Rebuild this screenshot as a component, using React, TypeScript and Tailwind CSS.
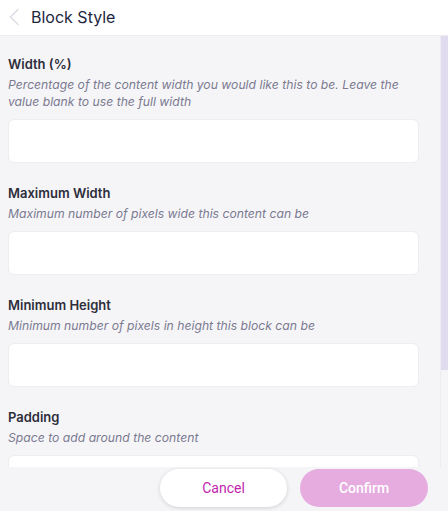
import React, { useState } from "react";

type Field = { key: string; label: string; help: string };

const fields: Field[] = [
  {
    key: "width",
    label: "Width (%)",
    help: "Percentage of the content width you would like this to be. Leave the value blank to use the full width",
  },
  { key: "maxWidth", label: "Maximum Width", help: "Maximum number of pixels wide this content can be" },
  { key: "minHeight", label: "Minimum Height", help: "Minimum number of pixels in height this block can be" },
  { key: "padding", label: "Padding", help: "Space to add around the content" },
];

export default function App() {
  const [values, setValues] = useState<Record<string, string>>({});

  return (
    <div className="h-[511px] w-[448px] flex flex-col bg-[#f5f5f8] font-['Inter',sans-serif] overflow-hidden">
      <header className="h-9 flex-shrink-0 flex items-center gap-[11px] pl-2 bg-white border-b border-[#ebebf0]">
        <svg width="12" height="18" viewBox="0 0 12 18" fill="none" className="mt-[-2px]">
          <path d="M10 1.5 L2.5 9 L10 16.5" stroke="#dadae6" strokeWidth="1.3" strokeLinecap="round" strokeLinejoin="round" />
        </svg>
        <span className="text-[16px] text-[#1d2740] mt-[-2px]">Block Style</span>
      </header>

      <div className="flex-1 min-h-0 flex">
        <div className="flex-1 overflow-y-auto [scrollbar-width:none]">
          <div className="pl-2 pr-[21px] pt-[19px] pb-[92px] flex flex-col gap-[21px]">
            {fields.map((f) => (
              <div key={f.key} className="flex flex-col">
                <label className="text-[13px] leading-[18px] font-semibold text-[#2e2e3a]">{f.label}</label>
                <p className="mt-[3px] text-[12.2px] leading-[17px] italic text-[#7b7a90]">{f.help}</p>
                <input
                  value={values[f.key] || ""}
                  onChange={(e) => setValues({ ...values, [f.key]: e.target.value })}
                  className="mt-[9px] h-[44px] w-full rounded-md bg-white border border-[#ededf2] px-3 text-sm outline-none"
                />
              </div>
            ))}
          </div>
        </div>
        {/* scrollbar */}
        <div className="w-2 flex-shrink-0 border-l border-[#ececf2] bg-[#f5f5f8]">
          <div className="h-[334px] bg-[#e0dbee]" />
        </div>
      </div>

      <footer className="h-[44px] flex-shrink-0 flex items-start justify-end gap-[13px] pr-5 pt-[2px] font-['Roboto',sans-serif]">
        <button className="w-[127px] h-[38px] rounded-full bg-white text-[14px] text-[#c21fae] shadow-[0_1px_4px_rgba(0,0,0,0.15)]">
          Cancel
        </button>
        <button className="w-[128px] h-[38px] rounded-full bg-[#e6acdf] text-[14px] font-medium text-white">
          Confirm
        </button>
      </footer>
    </div>
  );
}
